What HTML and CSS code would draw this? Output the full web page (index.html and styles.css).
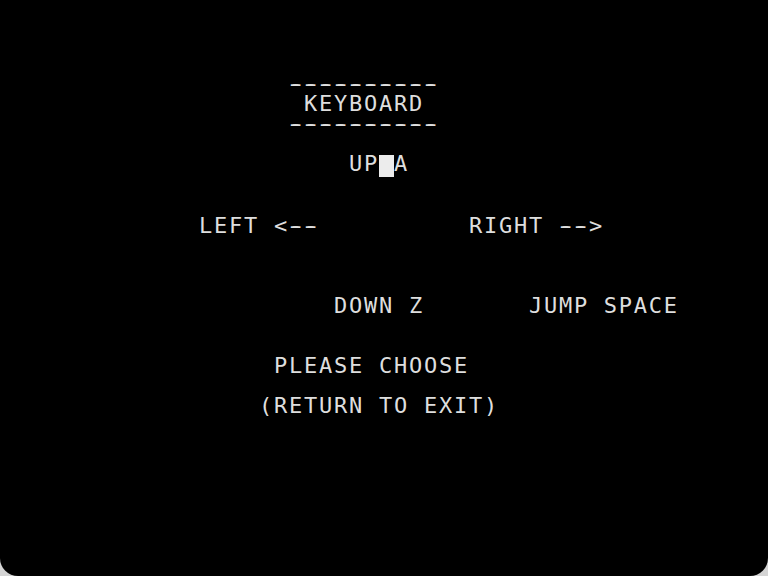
FILE: index.html
```html
<!DOCTYPE html>
<html lang="en">
<head>
  <meta charset="UTF-8">
  <title>Keyboard</title>
  <link rel="stylesheet" href="styles.css">
</head>
<body>

  <div class="screen">
<pre class="text">      <span class="dash">----------</span>
       KEYBOARD
      <span class="dash">----------</span>

          UP<span class="cursor"></span>A


LEFT &lt;<span class="dash">--</span>          RIGHT <span class="dash">--</span>&gt;



         DOWN Z       JUMP SPACE


     PLEASE CHOOSE

    (RETURN TO EXIT)</pre>
  </div>

</body>
</html>
```

FILE: styles.css
```css
body {
  margin: 0;
  background-color: #d4d4d4;
}
.screen {
  width: 768px;
  height: 576px;
  background-color: #000;
  border-radius: 0 0 18px 18px;
  overflow: hidden;
}
.text {
  margin: 0;
  padding: 74px 0 0 199px;
  font-family: "DejaVu Sans Mono", monospace;
  font-size: 22px;
  line-height: 20.1px;
  letter-spacing: 1.75px;
  color: #dedede;
}
/* the hyphen glyph is short, stretch it to a full dash */
.dash {
  text-shadow: 2px 0 #dedede, -2px 0 #dedede;
}
.cursor {
  display: inline-block;
  width: 15px;
  height: 22px;
  margin: -2px 0;
  vertical-align: -4px;
  background-color: #ececec;
}
```
